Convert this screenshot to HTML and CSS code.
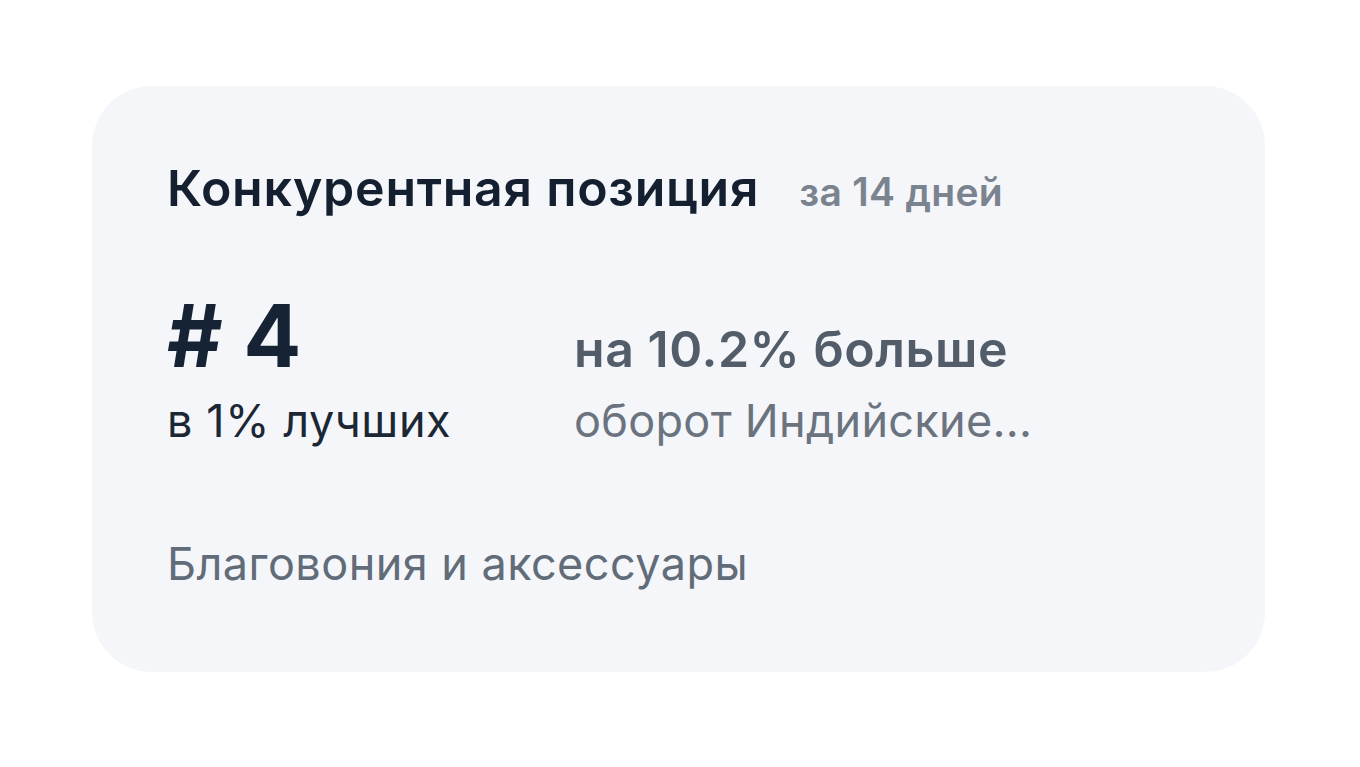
FILE: index.html
```html
<!DOCTYPE html>
<html lang="ru">
<head>
<meta charset="utf-8">
<link rel="stylesheet" href="styles.css">
</head>
<body>
<div class="page">
  <section class="card">
    <header class="card-head">
      <h2 class="title">Конкурентная позиция</h2>
      <span class="period">за 14 дней</span>
    </header>
    <div class="stats">
      <div class="rank"># 4</div>
      <div class="diff">на 10.2% больше</div>
      <div class="rank-sub">в 1% лучших</div>
      <div class="diff-sub">оборот Индийские...</div>
    </div>
    <div class="category">Благовония и аксессуары</div>
  </section>
</div>
</body>
</html>
```

FILE: styles.css
```css
html, body {
  margin: 0;
  padding: 0;
  background: #ffffff;
}
body {
  font-family: Inter, "Noto Sans", sans-serif;
  width: 1360px;
  height: 767px;
}
.page {
  padding: 86px 95px 0 92px;
}
.card {
  background: #f4f6f9;
  border-radius: 60px;
  height: 586px;
  box-sizing: border-box;
  padding: 72px 75px 0 75px;
}
.card-head {
  display: flex;
  align-items: baseline;
  gap: 40px;
}
.title {
  margin: 0;
  font-size: 50px;
  line-height: 60px;
  font-weight: 600;
  color: #142030;
  letter-spacing: 0.75px;
}
.period {
  font-size: 39px;
  font-weight: 600;
  color: #7b838f;
  letter-spacing: 0.3px;
}
.stats {
  display: grid;
  grid-template-columns: 407px auto;
  align-items: baseline;
  row-gap: 12px;
  margin-top: 73px;
}
.rank {
  font-size: 86px;
  font-weight: 700;
  color: #162334;
  line-height: 90px;
}
.rank-sub {
  font-size: 45px;
  color: #1c2735;
  line-height: 56px;
  letter-spacing: 0.6px;
}
.diff {
  font-size: 50px;
  font-weight: 600;
  color: #535d6a;
  line-height: 60px;
  letter-spacing: 0.55px;
}
.diff-sub {
  font-size: 45px;
  color: #6b737f;
  line-height: 56px;
  letter-spacing: 0.3px;
}
.category {
  margin-top: 87px;
  font-size: 45px;
  line-height: 56px;
  color: #626c79;
  letter-spacing: 0.45px;
}
```
